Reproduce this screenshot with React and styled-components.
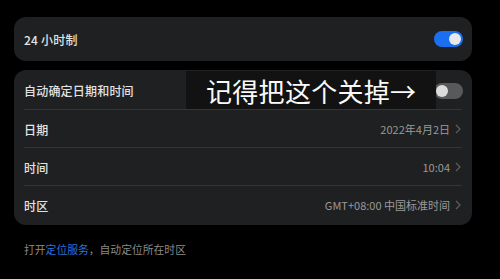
import React from "react";
import styled, { createGlobalStyle } from "styled-components";

const Global = createGlobalStyle`
  html, body { margin: 0; padding: 0; background: #000; }
  body { font-family: "Noto Sans CJK SC", "Noto Sans", sans-serif; }
`;

const Page = styled.div`
  width: 500px;
  height: 279px;
  box-sizing: border-box;
  padding: 17px 28px 0 14px;
  background: #000;
  display: flex;
  flex-direction: column;
`;

const Card = styled.div`
  position: relative;
  background: #1f2021;
  border-radius: 12px;
  padding: ${(p) => (p.$list ? "1px 0" : "0")};
  margin-top: ${(p) => p.$mt || 0}px;
  display: flex;
  flex-direction: column;
`;

const Row = styled.div`
  position: relative;
  height: ${(p) => p.$h || 38}px;
  display: flex;
  align-items: center;
  justify-content: space-between;
  padding: 0 9px 0 10px;
  box-sizing: border-box;
  &::after {
    content: "";
    display: ${(p) => (p.$last ? "none" : "block")};
    position: absolute;
    left: 10px;
    right: 10px;
    bottom: 0;
    height: 1px;
    background: #343536;
  }
`;

const Label = styled.span`
  font-size: 12px;
  font-weight: 500;
  color: #e2e2e2;
  letter-spacing: 0.2px;
`;

const Value = styled.span`
  display: flex;
  align-items: center;
  gap: 5px;
  font-size: 11px;
  color: #9a9a9a;
`;

const Chevron = () => (
  <svg width="6" height="10" viewBox="0 0 6 10" style={{ marginRight: 2 }}>
    <path d="M1 1 L5 5 L1 9" fill="none" stroke="#5e5e5e" strokeWidth="1.2" />
  </svg>
);

const Switch = styled.div`
  width: 29px;
  height: 16px;
  border-radius: 8px;
  background: ${(p) => (p.$on ? "#1a6ff0" : "#58595a")};
  display: flex;
  align-items: center;
  justify-content: ${(p) => (p.$on ? "flex-end" : "flex-start")};
  padding: 0 2px;
  box-sizing: border-box;
  &::before {
    content: "";
    width: 12px;
    height: 12px;
    border-radius: 50%;
    background: ${(p) => (p.$on ? "#e8e8e8" : "#dcdcdc")};
  }
`;

const Overlay = styled.div`
  position: absolute;
  left: 172px;
  top: 0;
  width: 250px;
  height: 39px;
  background: #121212;
  display: flex;
  align-items: center;
  padding-left: 20px;
  box-sizing: border-box;
  font-size: 26px;
  font-weight: 400;
  color: #fafafa;
  white-space: nowrap;
  letter-spacing: 0.3px;
`;

const Footer = styled.div`
  margin-top: 16px;
  padding-left: 10px;
  font-size: 10.8px;
  color: #8a8a8a;
`;

const Link = styled.span`
  color: #2f72d8;
`;

export default function App() {
  return (
    <>
      <Global />
      <Page>
        <Card>
          <Row $h={44} $last>
            <Label>24 小时制</Label>
            <Switch $on />
          </Row>
        </Card>
        <Card $list $mt={9}>
          <Row $h={39}>
            <Label>自动确定日期和时间</Label>
            <Switch />
            <Overlay>记得把这个关掉→</Overlay>
          </Row>
          <Row>
            <Label>日期</Label>
            <Value>
              2022年4月2日
              <Chevron />
            </Value>
          </Row>
          <Row>
            <Label>时间</Label>
            <Value>
              10:04
              <Chevron />
            </Value>
          </Row>
          <Row $last>
            <Label>时区</Label>
            <Value>
              GMT+08:00 中国标准时间
              <Chevron />
            </Value>
          </Row>
        </Card>
        <Footer>
          打开<Link>定位服务</Link>，自动定位所在时区
        </Footer>
      </Page>
    </>
  );
}
